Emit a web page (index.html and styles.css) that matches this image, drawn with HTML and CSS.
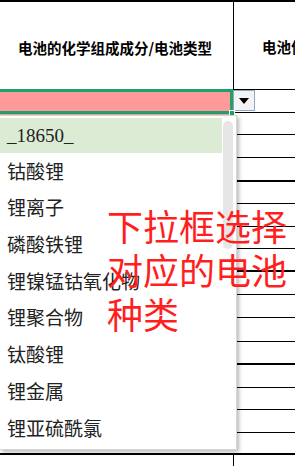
FILE: index.html
```html
<!DOCTYPE html>
<html lang="zh">
<head>
<meta charset="utf-8">
<title>电池类型</title>
<link rel="stylesheet" href="styles.css">
</head>
<body>
<div class="sheet">
  <div class="row header">
    <div class="c1 hdr">电池的化学组成成分/电池类型</div>
    <div class="c2 hdr2">电池信息</div>
  </div>
  <div class="row sel">
    <div class="c1 selcell"><span class="handle"></span></div>
    <div class="c2 btncell">
      <span class="ddbtn"><svg width="10" height="6" viewBox="0 0 10 6"><path d="M0 0H10L5 6Z" fill="#000"/></svg></span>
    </div>
  </div>
  <div class="rows">
    <div class="r h22"></div>
    <div class="r h23"></div>
    <div class="r h24 thick"></div>
    <div class="r h22"></div>
    <div class="r h23"></div>
    <div class="r h22"></div>
    <div class="r h23 thick"></div>
    <div class="r h23"></div>
    <div class="r h23"></div>
    <div class="r h24"></div>
    <div class="r h23 thick"></div>
    <div class="r h23"></div>
    <div class="r h22"></div>
    <div class="r h23"></div>
  </div>
  <div class="lastrow"></div>
  <div class="row foot">
    <div class="c1 footc1"></div>
    <div class="c2"></div>
  </div>

  <div class="dropdown">
    <ul class="list">
      <li class="item active">_18650_</li>
      <li class="item">钴酸锂</li>
      <li class="item">锂离子</li>
      <li class="item">磷酸铁锂</li>
      <li class="item">锂镍锰钴氧化物</li>
      <li class="item">锂聚合物</li>
      <li class="item">钛酸锂</li>
      <li class="item">锂金属</li>
      <li class="item">锂亚硫酰氯</li>
    </ul>
    <div class="scroll"><div class="thumb"></div></div>
  </div>

  <div class="note">下拉框选择<br>对应的电池<br>种类</div>
</div>
</body>
</html>
```
FILE: styles.css
```css
* { box-sizing: border-box; }
html, body { margin: 0; padding: 0; background: #fff; }
body {
  width: 295px;
  height: 466px;
  overflow: hidden;
  font-family: "Noto Sans CJK SC", "Noto Sans", sans-serif;
}
.sheet {
  position: relative;
  width: 295px;
  height: 466px;
}
.row { display: flex; }
.c1 { width: 234px; flex: none; }
.c2 { flex: 1; min-width: 0; }

.header {
  height: 90px;
  border-top: 2px solid #000;
}
.hdr {
  border-right: 1px solid #000;
  display: flex;
  align-items: center;
  justify-content: center;
  padding-right: 3px;
  padding-top: 2px;
  font-size: 14.5px;
  font-weight: bold;
  color: #000;
  white-space: nowrap;
}
.hdr2 {
  border-bottom: 1px solid #000;
  display: flex;
  align-items: center;
  padding-left: 28px;
  padding-top: 2px;
  font-size: 14.5px;
  font-weight: bold;
  white-space: nowrap;
  overflow: hidden;
}

.sel { height: 23px; }
.selcell {
  position: relative;
  width: 233px;
  height: 25px;
  margin-top: -1px;
  background: #ff9a9a;
  border-top: 3px solid #21a06a;
  border-bottom: 3px solid #21a06a;
  border-right: 3px solid #21a06a;
  box-shadow: 0 1px 0 #f2a0a0;
}
.handle {
  position: absolute;
  right: -5px;
  bottom: -5px;
  width: 6px;
  height: 6px;
  background: #21a06a;
  border: 1px solid #fff;
}
.btncell {
  border-bottom: 1px solid #000;
  padding-left: 1px;
}
.ddbtn {
  display: flex;
  align-items: center;
  justify-content: center;
  width: 22px;
  height: 21px;
  border: 1px solid #8fa9c2;
  background: #f3f3f3;
  margin-left: -1px;
  padding-top: 1px;
}

.rows { margin-left: 234px; }
.r { border-bottom: 1px solid #000; }
.r.thick { border-bottom-width: 2px; }
.h22 { height: 22px; }
.h23 { height: 23px; }
.h24 { height: 24px; }
.lastrow {
  height: 22px;
  border-bottom: 2px solid #000;
}
.foot { height: 12px; }
.footc1 { border-right: 1px solid #000; }

.dropdown {
  position: absolute;
  left: 0;
  top: 115px;
  width: 237px;
  height: 335px;
  display: flex;
  background: #fff;
  border: 1px solid #d6d6d6;
  border-left: none;
  box-shadow: 2px 2px 4px rgba(0, 0, 0, 0.28);
  padding-top: 2px;
}
.list {
  list-style: none;
  margin: 0;
  padding: 0;
  width: 222px;
  flex: none;
}
.item {
  height: 36.7px;
  line-height: 36.7px;
  padding-left: 7px;
  font-family: "Liberation Serif", "Noto Sans CJK SC", serif;
  font-size: 19px;
  color: #222;
  white-space: nowrap;
}
.item.active {
  background: #dcebd4;
  height: 35px;
  line-height: 35px;
  margin-bottom: 1.7px;
}
.scroll {
  flex: 1;
  padding: 3px 3px 0 1px;
}
.thumb {
  width: 10px;
  height: 128px;
  border-radius: 5px;
  background: #e6e6e6;
}

.note {
  position: absolute;
  left: 107px;
  top: 203px;
  font-size: 36px;
  line-height: 44px;
  color: #ff1f1f;
  white-space: nowrap;
}
```
